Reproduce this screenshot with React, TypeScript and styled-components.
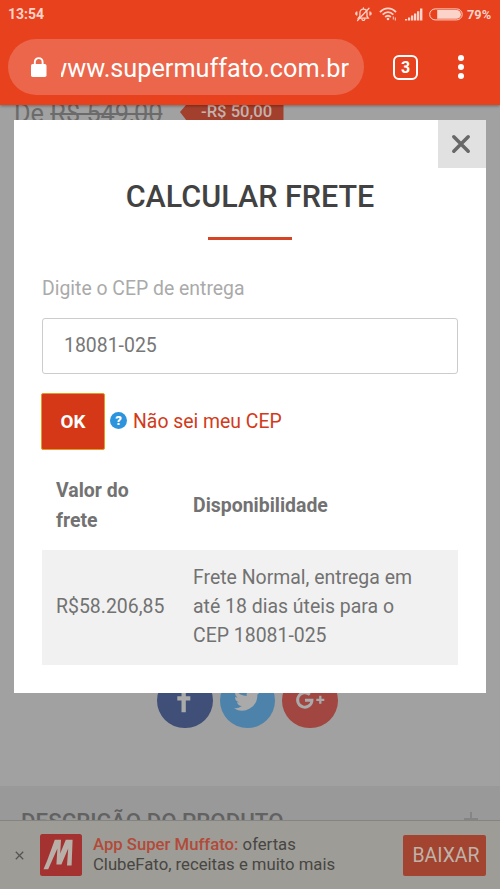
import React from "react";
import styled, { createGlobalStyle } from "styled-components";

const GlobalStyle = createGlobalStyle`
  * { box-sizing: border-box; }
  body { margin: 0; font-family: Roboto, sans-serif; background: #a1a1a1; overflow: hidden; }
`;

const Screen = styled.div`
  position: relative;
  width: 500px;
  height: 889px;
  display: flex;
  flex-direction: column;
  overflow: hidden;
  background: #a1a1a1;
`;

const BrowserChrome = styled.header`
  flex: none;
  height: 105px;
  background: #e8411e;
  box-shadow: 0 1px 3px rgba(0, 0, 0, 0.35);
  z-index: 1;
`;

const StatusBar = styled.div`
  height: 28px;
  padding: 0 9px 0 8px;
  display: flex;
  align-items: center;
  color: #fcd3c8;
  font-size: 14px;
  font-weight: 700;
`;

const Clock = styled.span`
  flex: 1;
`;

const StatusIcons = styled.div`
  display: flex;
  align-items: center;
  height: 28px;
`;

const StatusGap = styled.span<{ $w: number }>`
  width: ${(p) => p.$w}px;
`;

const Percent = styled.span`
  margin-left: 4px;
  font-size: 12.8px;
  font-weight: 700;
  width: 24px;
  white-space: nowrap;
`;

const AddressRow = styled.div`
  display: flex;
  align-items: center;
  height: 56px;
  margin-top: 11px;
  padding-left: 8px;
`;

const AddressBar = styled.div`
  width: 356px;
  height: 56px;
  border-radius: 28px;
  background: #eb664b;
  display: flex;
  align-items: center;
  padding-left: 22px;
  color: #fff;
`;

const UrlClip = styled.div`
  margin-left: 14px;
  width: 288px;
  overflow: hidden;
  display: flex;
  justify-content: flex-end;
  font-size: 25.25px;
  line-height: 34px;
  white-space: nowrap;
  padding-top: 3px;
`;

const TabCount = styled.div`
  margin-left: 29px;
  width: 25px;
  height: 25px;
  border: 2.5px solid #fff;
  border-radius: 6px;
  color: #fff;
  font-size: 16px;
  font-weight: 700;
  line-height: 21px;
  text-align: center;
`;

const Kebab = styled.div`
  margin-left: 40px;
  display: flex;
  flex-direction: column;
  gap: 2.6px;
`;

const Dot = styled.i`
  width: 6px;
  height: 6px;
  border-radius: 50%;
  background: #fff;
`;

const ProductPage = styled.main`
  flex: 1;
  display: flex;
  flex-direction: column;
  min-height: 0;
`;

const PriceRow = styled.div`
  display: flex;
  height: 20px;
  padding-left: 14px;
  color: #6b6b6b;
`;

const OldPrice = styled.span`
  width: 166px;
  font-size: 25.3px;
  line-height: 17px;
  white-space: nowrap;
`;

const Strike = styled.s`
  text-decoration-thickness: 1.5px;
`;

const Discount = styled.span`
  width: 103.5px;
  height: 20px;
  padding-left: 21px;
  background: #a3402d;
  clip-path: polygon(0 7px, 6px 0, 100% 0, 100% 100%, 10px 100%);
  color: #c2b3af;
  font-size: 16.6px;
  font-weight: 500;
  line-height: 14px;
  white-space: nowrap;
`;

const ShareRow = styled.div`
  display: flex;
  gap: 7px;
  margin-top: 547.5px;
  padding-left: 157px;
`;

const ShareButton = styled.span<{ $color: string }>`
  width: 55.5px;
  height: 55.5px;
  border-radius: 50%;
  background: ${(p) => p.$color};
  display: flex;
  align-items: center;
  justify-content: center;
`;

const DescriptionHead = styled.section`
  flex: 1;
  margin-top: 57.5px;
  background: #999;
  padding: 20px 22px 0 21px;
  display: flex;
  justify-content: space-between;
  color: #626262;
  font-size: 22.3px;
  font-weight: 500;
  line-height: 30px;
`;

const PlusIcon = styled.svg`
  margin-top: 6px;
`;

const AppBanner = styled.aside`
  position: absolute;
  left: 0;
  right: 0;
  bottom: 0;
  z-index: 2;
  height: 69px;
  border-top: 1px solid #858480;
  background: #9e9c96;
  padding: 0 14px 0 15px;
  display: flex;
  align-items: center;
`;

const LogoSvg = styled.svg`
  flex: none;
  margin-left: 16px;
`;

const BannerText = styled.p`
  margin: 0 0 0 11px;
  flex: 1;
  color: #474643;
  font-size: 16.7px;
  line-height: 20px;
  white-space: nowrap;
`;

const BannerName = styled.span`
  color: #b24a39;
  font-weight: 500;
`;

const DownloadButton = styled.button`
  width: 83px;
  height: 41px;
  padding: 0 0 0 3px;
  border: 0;
  border-radius: 2px;
  background: #a24430;
  color: #bfb3a9;
  font: 400 19.4px Roboto, sans-serif;
`;

const Modal = styled.section`
  position: absolute;
  z-index: 3;
  left: 14px;
  top: 120px;
  width: 472px;
  height: 573px;
  padding: 57px 28px 0;
  background: #fff;
`;

const CloseButton = styled.button`
  position: absolute;
  right: 0;
  top: 0;
  width: 48.5px;
  height: 48px;
  border: 0;
  padding: 0 1px 1px 0;
  background: #e1e1e1;
  display: flex;
  align-items: center;
  justify-content: center;
`;

const Title = styled.h1`
  margin: 0;
  height: 60px;
  line-height: 40px;
  font-size: 30.5px;
  font-weight: 500;
  text-align: center;
  color: #424242;
  white-space: nowrap;
`;

const Rule = styled.div`
  width: 84px;
  height: 3px;
  margin: 0 auto 34px;
  background: #d54427;
`;

const Label = styled.label`
  display: block;
  height: 44px;
  line-height: 29px;
  font-size: 19.4px;
  color: #aaa;
`;

const CepInput = styled.input`
  display: block;
  width: 416px;
  height: 56px;
  border: 1.5px solid #ccc;
  border-radius: 3px;
  padding: 0 21px 1px;
  font: 400 19.44px Roboto, sans-serif;
  color: #777;
  outline: 0;
`;

const Actions = styled.div`
  display: flex;
  align-items: center;
  height: 57px;
  margin: 19px 0 13px -1px;
`;

const OkButton = styled.button`
  width: 64px;
  height: 57px;
  padding: 0;
  border: 1.5px solid #e59a22;
  border-radius: 2px;
  background: #d53816;
  color: #fff;
  font: 700 18.8px Roboto, sans-serif;
`;

const HelpBadge = styled.span`
  width: 17px;
  height: 17px;
  margin: 0 6px 3px 5px;
  border-radius: 50%;
  background: #2b94dc;
  color: #fff;
  font-size: 13px;
  font-weight: 900;
  line-height: 17px;
  text-align: center;
`;

const HelpLink = styled.a`
  color: #d23a1a;
  font-size: 19.4px;
`;

const Table = styled.div`
  width: 416px;
  color: #727272;
  font-size: 19.44px;
  line-height: 29.1px;
`;

const Row = styled.div<{ $head?: boolean }>`
  display: grid;
  grid-template-columns: 137px 1fr;
  align-items: center;
  height: ${(p) => (p.$head ? "87px" : "115px")};
  padding: ${(p) => (p.$head ? "0 14px 2px" : "0 14px 2px")};
  font-weight: ${(p) => (p.$head ? 700 : 400)};
  background: ${(p) => (p.$head ? "transparent" : "#f1f1f1")};
`;

const MutedBell = () => (
  <svg width="17" height="15" viewBox="0 0 17 15" fill="none" stroke="#fcd3c8" strokeWidth="1.3" strokeLinecap="round">
    <path d="M3.3 11.2h10L12 9.2V6c0-2.4-1.5-3.8-3.6-3.8S4.9 3.7 4.9 6v3.1zM7 12.3c.3 1.5 2.5 1.5 2.8 0M8.4 2V1" />
    <path d="M2.5 13.5 14 1.2" />
    <path d="M1.8 5v3M.8 5.8v1.4M15 5v3M16 5.8v1.4" />
  </svg>
);

const Wifi = () => (
  <svg width="18" height="14" viewBox="0 0 18 14" fill="none" stroke="#fcd3c8" strokeWidth="1.8">
    <path d="M1 5.2C5.7.2 12.3.2 17 5.2M3.7 7.6C7 4.2 11 4.2 14.3 7.6M6.2 10c1.7-1.7 3.9-1.7 5.6 0" />
    <circle cx="9" cy="12" r="1.3" fill="#fcd3c8" stroke="none" />
    <path d="M14.3 9.5v3M16.3 10.5v3" strokeWidth="1" />
  </svg>
);

const Signal = () => (
  <svg width="18" height="13" viewBox="0 0 18 13" fill="#fcd3c8">
    <path d="M0 11h2.2v1.5H0zM3 9.5h2.2v3H3zM6 7.5h2.3v5H6zM9 5.5h2.3v7H9zM12 3.2h2.3v9.3H12zM15 .5h2.4v12H15z" />
  </svg>
);

const Battery = () => (
  <svg width="34" height="13" viewBox="0 0 34 13">
    <rect x=".7" y=".9" width="32.5" height="11" rx="5.5" fill="none" stroke="#fcd3c8" strokeWidth="1" />
    <path d="M8.2 2H27.5a4.4 4.4 0 0 1 0 8.8H8.2z" fill="#fcd3c8" />
  </svg>
);

const BannerLogo = () => (
  <LogoSvg width="42" height="42" viewBox="0 0 42 42">
    <rect width="42" height="42" rx="2.5" fill="#a33230" />
    <path
      d="M3.5 35.2H8.2L17.4 14.5 16.4 30.5H21.4L28.2 14.5 27 31.5H31.6L32.6 5.8H25.8L20.2 19.5 21 5.8H14.8L7.2 26.5z"
      fill="#b8b0a8"
    />
  </LogoSvg>
);

export default function App() {
  return (
    <Screen>
      <GlobalStyle />
      <BrowserChrome>
        <StatusBar>
          <Clock>13:54</Clock>
          <StatusIcons>
            <MutedBell />
            <StatusGap $w={7} />
            <Wifi />
            <StatusGap $w={8} />
            <Signal />
            <StatusGap $w={6} />
            <Battery />
            <Percent>79%</Percent>
          </StatusIcons>
        </StatusBar>
        <AddressRow>
          <AddressBar>
            <svg width="17" height="21" viewBox="0 0 17 21">
              <rect x="1" y="7" width="15.5" height="13" rx="1.7" fill="#fff" />
              <path d="M4.8 8V5a3.9 3.9 0 0 1 7.8 0v3" fill="none" stroke="#fff" strokeWidth="1.9" />
            </svg>
            <UrlClip>
              <span>www.supermuffato.com.br</span>
            </UrlClip>
          </AddressBar>
          <TabCount>3</TabCount>
          <Kebab>
            <Dot />
            <Dot />
            <Dot />
          </Kebab>
        </AddressRow>
      </BrowserChrome>

      <ProductPage>
        <PriceRow>
          <OldPrice>
            De <Strike>R$ 549,00</Strike>
          </OldPrice>
          <Discount>-R$ 50,00</Discount>
        </PriceRow>
        <ShareRow>
          <ShareButton $color="#3f4f78">
            <svg width="28" height="32" viewBox="0 0 28 32" fill="#aaa">
              <path d="M10.5 28.3V16.4H6.3v-4.2h4.2V9c0-4 2-6 5.5-6h3v4.5h-2.2c-1.5 0-2 .6-2 2v2.7h4.5v4.2h-4.5v11.9z" />
            </svg>
          </ShareButton>
          <ShareButton $color="#4d83aa">
            <svg width="26" height="26" viewBox="0 0 24 24" fill="#aaa">
              <path d="M23.95 4.57a10 10 0 0 1-2.82.77 4.96 4.96 0 0 0 2.16-2.72c-.95.55-2 .96-3.13 1.18a4.92 4.92 0 0 0-8.38 4.48C7.69 8.1 4.07 6.13 1.64 3.16a4.92 4.92 0 0 0 1.52 6.57 4.9 4.9 0 0 1-2.23-.61v.06a4.92 4.92 0 0 0 3.95 4.83 5 5 0 0 1-2.21.08 4.94 4.94 0 0 0 4.6 3.42A9.87 9.87 0 0 1 0 19.54a13.99 13.99 0 0 0 21.5-12.4c.94-.68 1.76-1.53 2.45-2.57z" />
            </svg>
          </ShareButton>
          <ShareButton $color="#a14640">
            <svg width="30" height="22" viewBox="0 0 30 22" fill="none" stroke="#aaa" strokeWidth="2.9">
              <path d="M14.8 5.8A7.2 7.2 0 1 0 17 11.2H10" />
              <path d="M21.3 10.8h8M25.3 6.8v8" strokeWidth="2.3" />
            </svg>
          </ShareButton>
        </ShareRow>
        <DescriptionHead>
          <span>DESCRIÇÃO DO PRODUTO</span>
          <PlusIcon width="14" height="14" viewBox="0 0 14 14" stroke="#858585" strokeWidth="2">
            <path d="M0 7h14M7 0v14" />
          </PlusIcon>
        </DescriptionHead>
      </ProductPage>

      <AppBanner>
        <svg width="9" height="9" viewBox="0 0 9 9" stroke="#555" strokeWidth="1.3">
          <path d="m.8.8 7.4 7.4M8.2.8.8 8.2" />
        </svg>
        <BannerLogo />
        <BannerText>
          <BannerName>App Super Muffato:</BannerName> ofertas
          <br />
          ClubeFato, receitas e muito mais
        </BannerText>
        <DownloadButton>BAIXAR</DownloadButton>
      </AppBanner>

      <Modal>
        <CloseButton aria-label="Fechar">
          <svg width="20" height="20" viewBox="0 0 20 20" stroke="#686868" strokeWidth="3.5" strokeLinecap="round">
            <path d="m2.8 2.8 14.4 14.4M17.2 2.8 2.8 17.2" />
          </svg>
        </CloseButton>
        <Title>CALCULAR FRETE</Title>
        <Rule />
        <Label htmlFor="cep">Digite o CEP de entrega</Label>
        <CepInput id="cep" defaultValue="18081-025" />
        <Actions>
          <OkButton>OK</OkButton>
          <HelpBadge>?</HelpBadge>
          <HelpLink>Não sei meu CEP</HelpLink>
        </Actions>
        <Table>
          <Row $head>
            <span>
              Valor do
              <br />
              frete
            </span>
            <span>Disponibilidade</span>
          </Row>
          <Row>
            <span>R$58.206,85</span>
            <span>
              Frete Normal, entrega em
              <br />
              até 18 dias úteis para o<br />
              CEP 18081-025
            </span>
          </Row>
        </Table>
      </Modal>
    </Screen>
  );
}
